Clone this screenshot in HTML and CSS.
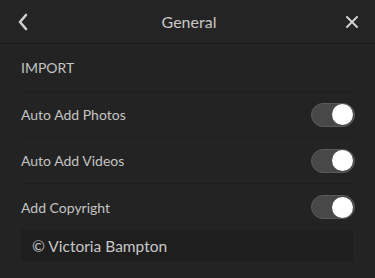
FILE: index.html
```html
<!DOCTYPE html>
<html lang="en">
<head>
    <meta charset="UTF-8">
    <title>General</title>
    <link rel="stylesheet" href="styles.css">
</head>
<body>
    <div class="topBar">
        <svg class="backIcon" width="12" height="18" viewBox="0 0 12 18">
            <path d="M9 2 L3 9 L9 16" fill="none" stroke="#cfcfcf" stroke-width="2.6" stroke-linecap="round" stroke-linejoin="round"/>
        </svg>
        <div class="topBarTitle">General</div>
        <svg class="closeIcon" width="14" height="14" viewBox="0 0 14 14">
            <path d="M2 2 L12 12 M12 2 L2 12" fill="none" stroke="#cfcfcf" stroke-width="2" stroke-linecap="round"/>
        </svg>
    </div>

    <div class="settingsList">
        <div class="sectionLabel">IMPORT</div>

        <div class="settingRow">
            <span>Auto Add Photos</span>
            <div class="toggle"><div class="toggleKnob"></div></div>
        </div>

        <div class="settingRow">
            <span>Auto Add Videos</span>
            <div class="toggle"><div class="toggleKnob"></div></div>
        </div>

        <div class="settingRow noLine">
            <span>Add Copyright</span>
            <div class="toggle"><div class="toggleKnob"></div></div>
        </div>

        <div class="copyrightBox">© Victoria Bampton</div>
    </div>
</body>
</html>
```
FILE: styles.css
```css
html, body
{
    margin: 0;
    background-color: #232323;
    font-family: Lato, "Open Sans", sans-serif;
    color: #c4c4c4;
}

.topBar
{
    height: 43px;
    display: flex;
    align-items: center;
    justify-content: space-between;
    padding: 0 16px 0 17px;
    border-bottom: 1px solid #1b1b1b;
    background-color: #242424;
}

.topBarTitle
{
    font-size: 16px;
    color: #c8c8c8;
    margin-left: 4px;
}

.settingsList
{
    padding: 0 20px 0 21px;
}

.sectionLabel
{
    height: 47px;
    display: flex;
    align-items: center;
    font-size: 14px;
    border-bottom: 1px solid #1d1d1d;
}

.settingRow
{
    height: 45px;
    display: flex;
    align-items: center;
    justify-content: space-between;
    font-size: 14px;
    border-bottom: 1px solid #1d1d1d;
}

.settingRow.noLine
{
    border-bottom: none;
    height: 46px;
}

.toggle
{
    box-sizing: border-box;
    width: 44px;
    height: 24px;
    border-radius: 12px;
    background-color: #484848;
    border: 1px solid #5a5a5a;
    display: flex;
    align-items: center;
    justify-content: flex-end;
    padding-right: 1px;
}

.toggleKnob
{
    width: 21px;
    height: 21px;
    border-radius: 50%;
    background-color: #ffffff;
}

.copyrightBox
{
    height: 31px;
    display: flex;
    align-items: center;
    padding-left: 11px;
    margin-right: 2px;
    background-color: #1e1e1e;
    font-size: 15.5px;
    color: #c8c8c8;
}
```
